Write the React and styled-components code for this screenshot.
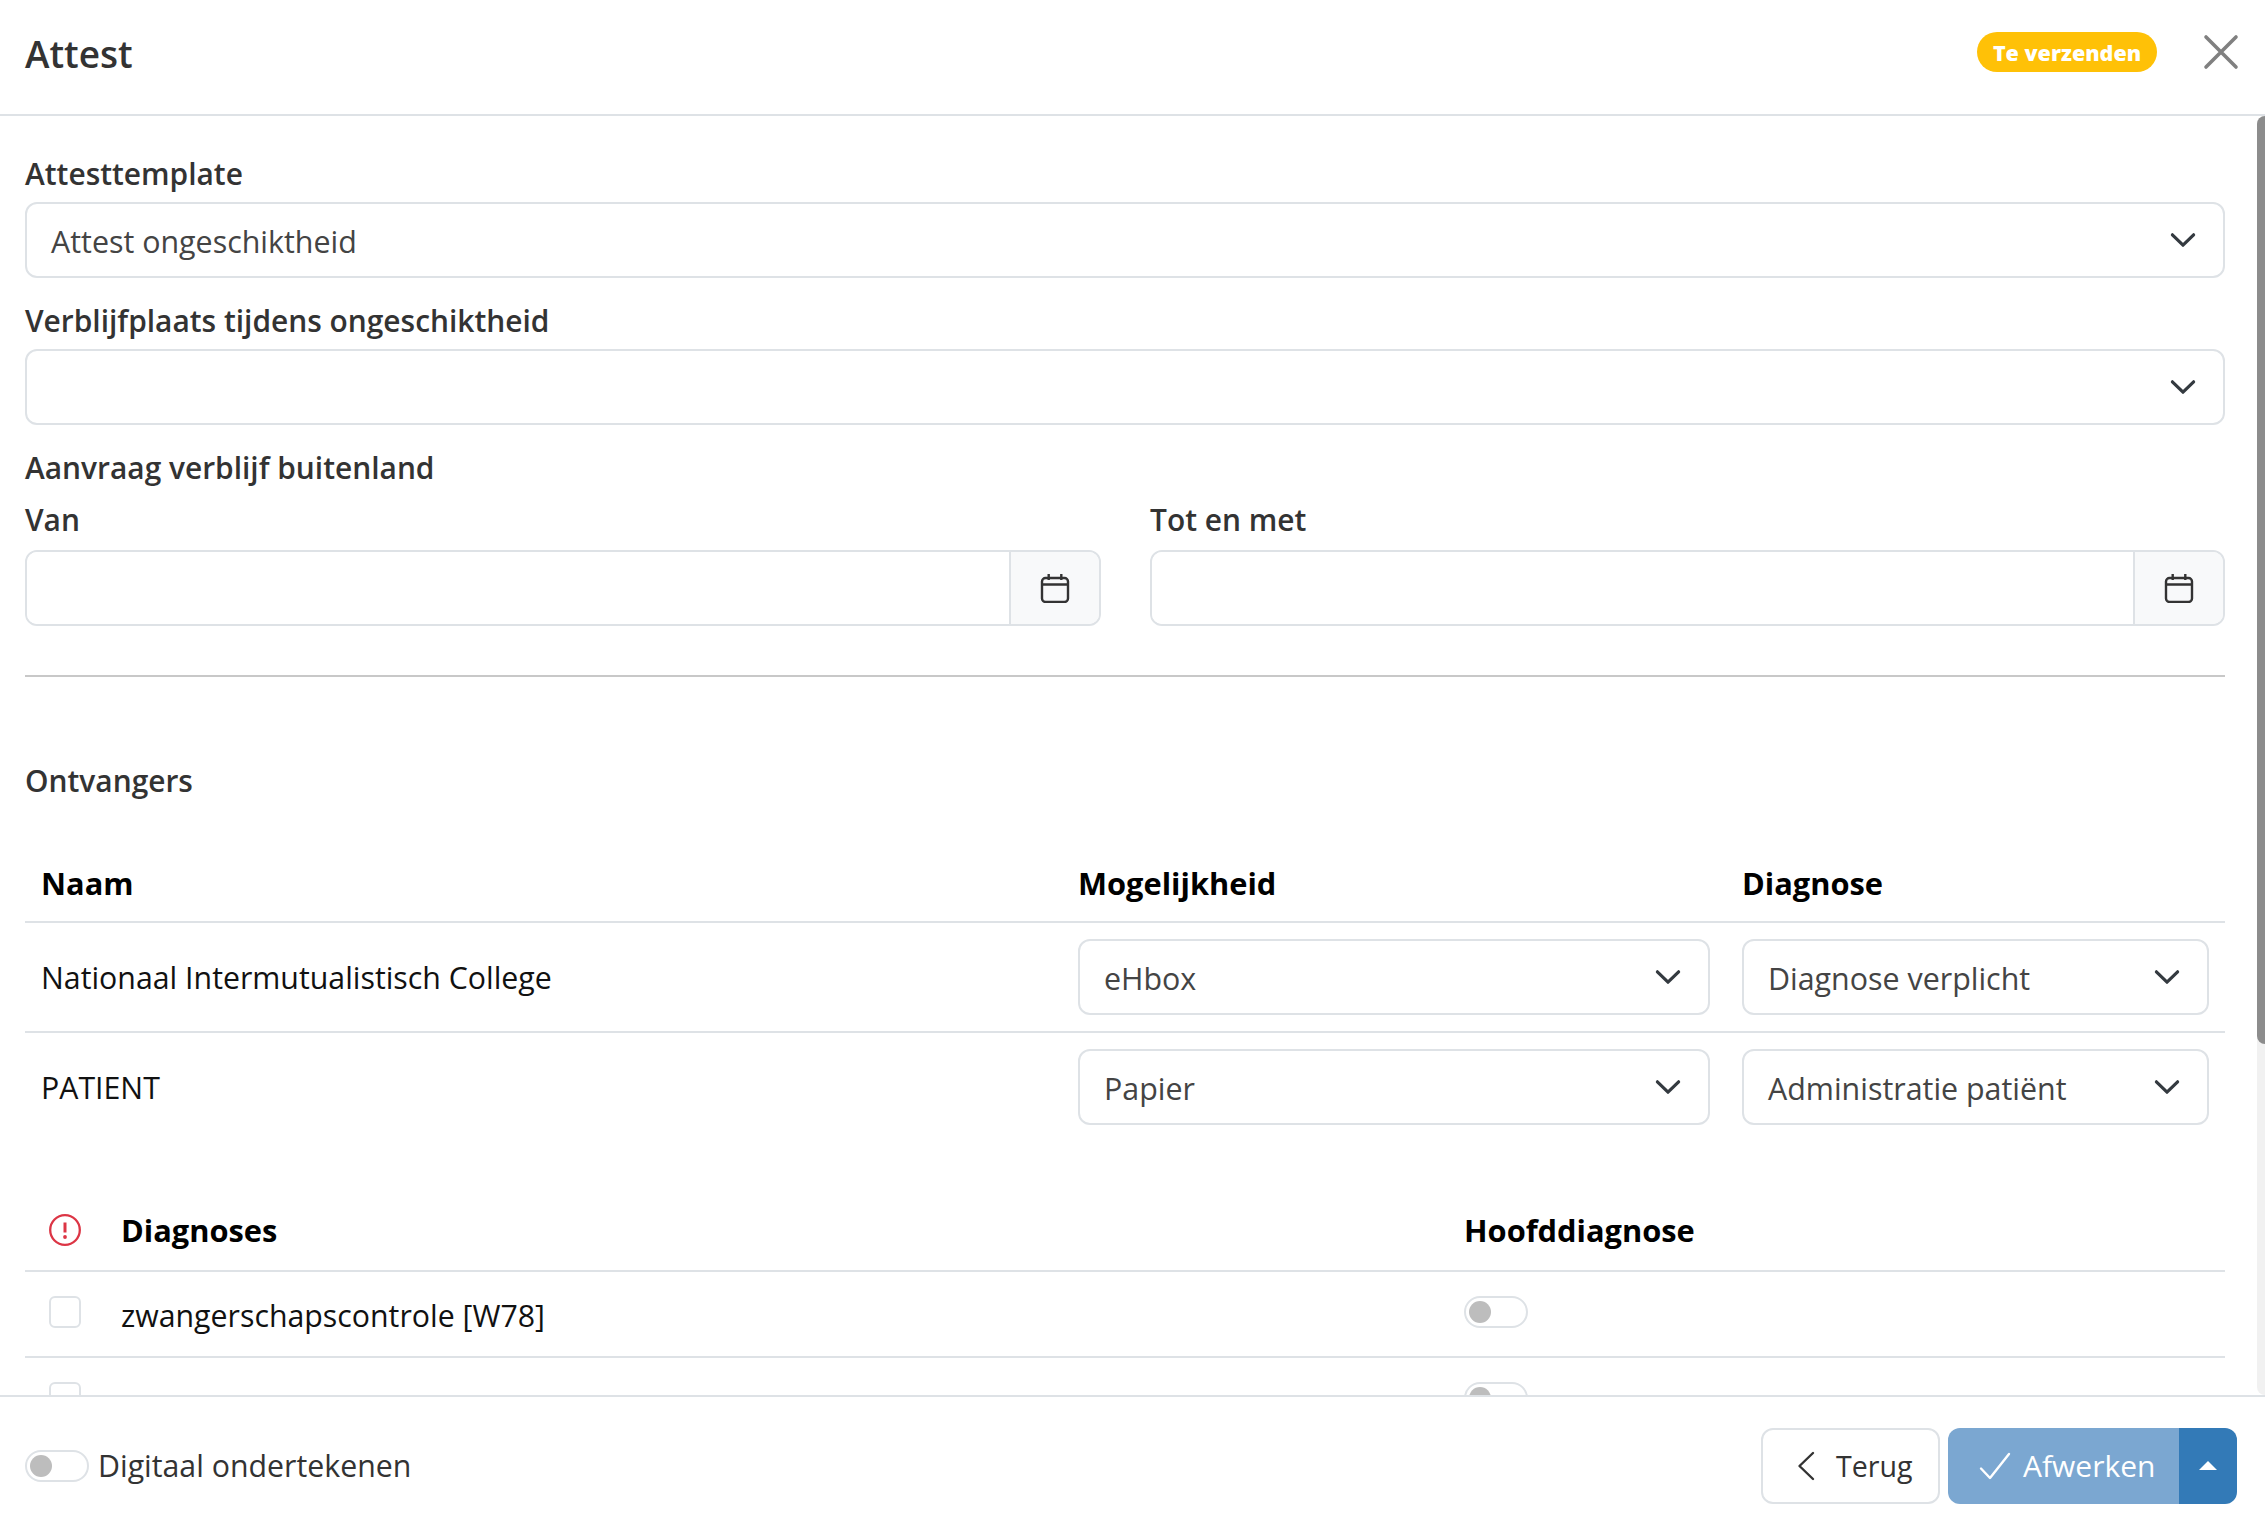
import React from "react"
import styled, { createGlobalStyle } from "styled-components"

const FONT = `"Open Sans", "Noto Sans", "Liberation Sans", sans-serif`

const GlobalStyle = createGlobalStyle`
    html, body {
        margin: 0;
        padding: 0;
        background: #fff;
        overflow: hidden;
    }
    * {
        box-sizing: border-box;
    }
`

const ChevronDown = () => (
    <svg width="32" height="32" viewBox="0 0 16 16" fill="none" stroke="#343a40" strokeWidth="1.6" strokeLinecap="round" strokeLinejoin="round">
        <path d="M2.7 5.4 8 10.6l5.3-5.2" />
    </svg>
)

const CalendarIcon = () => (
    <svg width="30" height="30" viewBox="0 0 30 30" fill="none" stroke="#333" strokeWidth="2.4">
        <rect x="2" y="5" width="26" height="24" rx="3.5" />
        <path d="M2 11.5h26M8.7 1v6M21.3 1v6" />
    </svg>
)

const AlertIcon = () => (
    <svg width="32" height="32" viewBox="0 0 32 32" fill="none" stroke="#dc3545" strokeWidth="2.3">
        <circle cx="16" cy="16" r="14.8" />
        <path d="M16 8.5v10" strokeWidth="3" />
        <circle cx="16" cy="23" r="1.9" fill="#dc3545" stroke="none" />
    </svg>
)

const CloseIcon = () => (
    <svg width="36" height="36" viewBox="0 0 36 36" fill="none" stroke="#808080" strokeWidth="3.6" strokeLinecap="round">
        <path d="M3 3l30 30M33 3 3 33" />
    </svg>
)

const BackIcon = () => (
    <svg width="18" height="30" viewBox="0 0 18 30" fill="none" stroke="#333" strokeWidth="2.4" strokeLinecap="round" strokeLinejoin="round">
        <path d="M16 2 2.5 15 16 28" />
    </svg>
)

const CheckIcon = () => (
    <svg width="32" height="28" viewBox="0 0 32 28" fill="none" stroke="#fff" strokeWidth="2.4" strokeLinecap="round" strokeLinejoin="round">
        <path d="M2 16.5 11 26 30 2" />
    </svg>
)

const SelectBox = ({ value }) => (
    <Select>
        <span>{value}</span>
        <ChevronDown />
    </Select>
)

const DateField = ({ label }) => (
    <div>
        <Label $tight>{label}</Label>
        <InputGroup>
            <DateInput />
            <Addon>
                <CalendarIcon />
            </Addon>
        </InputGroup>
    </div>
)

const App = () => {
    const recipients = [
        { name: "Nationaal Intermutualistisch College", option: "eHbox", diagnosis: "Diagnose verplicht" },
        { name: "PATIENT", option: "Papier", diagnosis: "Administratie patiënt" },
    ]

    return (
        <Page>
            <GlobalStyle />
            <Header>
                <Title>Attest</Title>
                <HeaderActions>
                    <Badge>Te verzenden</Badge>
                    <CloseButton>
                        <CloseIcon />
                    </CloseButton>
                </HeaderActions>
            </Header>

            <BodyFrame>
                <Body>
                    <Label>Attesttemplate</Label>
                    <SelectBox value="Attest ongeschiktheid" />
                    <Label $spaced>Verblijfplaats tijdens ongeschiktheid</Label>
                    <SelectBox value="" />
                    <Label $spaced>Aanvraag verblijf buitenland</Label>
                    <DateRow>
                        <DateField label="Van" />
                        <DateField label="Tot en met" />
                    </DateRow>
                    <Divider />
                    <SectionTitle>Ontvangers</SectionTitle>

                    <RecipientHead>
                        <HeadCell>Naam</HeadCell>
                        <HeadCell>Mogelijkheid</HeadCell>
                        <HeadCell>Diagnose</HeadCell>
                    </RecipientHead>
                    {recipients.map((r, i) => (
                        <RecipientRow key={r.name} $last={i === recipients.length - 1}>
                            <NameCell>{r.name}</NameCell>
                            <SelectCell><SelectBox value={r.option} /></SelectCell>
                            <SelectCell><SelectBox value={r.diagnosis} /></SelectCell>
                        </RecipientRow>
                    ))}

                    <DiagnosisHead>
                        <IconCell><AlertIcon /></IconCell>
                        <HeadCell $flush>Diagnoses</HeadCell>
                        <HeadCell $flush>Hoofddiagnose</HeadCell>
                    </DiagnosisHead>
                    <DiagnosisRow>
                        <IconCell><Checkbox /></IconCell>
                        <DiagnosisText>zwangerschapscontrole [W78]</DiagnosisText>
                        <div><Toggle /></div>
                    </DiagnosisRow>
                    <DiagnosisRow>
                        <IconCell><Checkbox /></IconCell>
                        <DiagnosisText />
                        <div><Toggle /></div>
                    </DiagnosisRow>
                </Body>
                <ScrollTrack>
                    <ScrollThumb />
                </ScrollTrack>
            </BodyFrame>

            <Footer>
                <SignOption>
                    <Toggle />
                    <SignLabel>Digitaal ondertekenen</SignLabel>
                </SignOption>
                <FooterActions>
                    <BackButton>
                        <BackIcon />
                        Terug
                    </BackButton>
                    <SplitButton>
                        <FinishButton>
                            <CheckIcon />
                            Afwerken
                        </FinishButton>
                        <CaretButton>
                            <Caret />
                        </CaretButton>
                    </SplitButton>
                </FooterActions>
            </Footer>
        </Page>
    )
}

const Page = styled.div`
    display: flex;
    flex-direction: column;
    width: 2265px;
    height: 1531px;
    font-family: ${FONT};
    color: #333;
    background: #fff;
`

const Header = styled.header`
    flex: 0 0 116px;
    display: flex;
    align-items: center;
    justify-content: space-between;
    padding: 0 26px 10px 25px;
    border-bottom: 2px solid #dee2e6;
`

const Title = styled.h1`
    margin: 4px 0 0;
    font-size: 37px;
    font-weight: 600;
    line-height: 48px;
    color: #333;
`

const HeaderActions = styled.div`
    display: flex;
    align-items: center;
    gap: 46px;
`

const Badge = styled.span`
    display: flex;
    align-items: center;
    justify-content: center;
    width: 180px;
    height: 40px;
    border-radius: 20px;
    background: #ffc107;
    color: #fff;
    font-size: 21.5px;
    font-weight: 800;
`

const CloseButton = styled.button`
    display: flex;
    padding: 0;
    border: 0;
    background: none;
`

const BodyFrame = styled.div`
    flex: 1;
    min-height: 0;
    position: relative;
`

const Body = styled.main`
    height: 100%;
    overflow: hidden;
    padding: 38px 40px 0 25px;
`

const ScrollTrack = styled.div`
    position: absolute;
    top: 0;
    right: 0;
    bottom: 0;
    width: 8px;
    border-radius: 8px 0 0 8px;
    background: #f1f1f1;
`

const ScrollThumb = styled.div`
    height: 928px;
    border-radius: 8px 0 0 8px;
    background: #8c8c8c;
`

const Label = styled.label`
    display: block;
    margin-top: ${p => (p.$spaced ? "23px" : "0")};
    margin-bottom: ${p => (p.$tight ? "10px" : "8px")};
    font-size: 29.9px;
    font-weight: 550;
    line-height: 40px;
    color: #333;
`

const Select = styled.div`
    display: flex;
    align-items: center;
    justify-content: space-between;
    height: 76px;
    padding: 0 24px;
    border: 2px solid #dee2e6;
    border-radius: 12px;
    background: #fff;
    font-size: 30.4px;
    color: #444;

    span {
        padding-top: 2px;
    }
`

const DateRow = styled.div`
    display: grid;
    grid-template-columns: 1076px 1075px;
    justify-content: space-between;
    margin-top: 12px;
`

const InputGroup = styled.div`
    display: flex;
    height: 76px;
    border: 2px solid #dee2e6;
    border-radius: 12px;
    overflow: hidden;
`

const DateInput = styled.div`
    flex: 1;
    background: #fff;
`

const Addon = styled.div`
    flex: 0 0 90px;
    display: flex;
    align-items: center;
    justify-content: center;
    border-left: 2px solid #dee2e6;
    background: #f8f9fa;
`

const Divider = styled.hr`
    margin: 49px 0 0;
    border: 0;
    border-top: 2px solid #c8c8c8;
`

const SectionTitle = styled.h2`
    margin: 80px 0 0;
    font-size: 29.9px;
    font-weight: 550;
    line-height: 48px;
    color: #333;
`

const recipientColumns = "1037px 664px 1fr"

const RecipientHead = styled.div`
    display: grid;
    grid-template-columns: ${recipientColumns};
    align-items: center;
    height: 99px;
    margin-top: 19px;
    padding-top: 20px;
    border-bottom: 2px solid #dee2e6;
`

const HeadCell = styled.div`
    padding: ${p => (p.$flush ? "0" : "0 16px")};
    font-size: 30.8px;
    font-weight: 700;
    color: #000;
`

const RecipientRow = styled.div`
    display: grid;
    grid-template-columns: ${recipientColumns};
    align-items: center;
    height: 110px;
    border-bottom: 2px solid ${p => (p.$last ? "transparent" : "#dee2e6")};
`

const NameCell = styled.div`
    padding: 0 16px;
    font-size: 30.3px;
    color: #111;
`

const SelectCell = styled.div`
    padding: 0 16px;
`

const diagnosisColumns = "96px 1343px 1fr"

const DiagnosisHead = styled.div`
    display: grid;
    grid-template-columns: ${diagnosisColumns};
    align-items: center;
    height: 129px;
    padding-top: 46px;
    border-bottom: 2px solid #dee2e6;
`

const IconCell = styled.div`
    display: flex;
    padding-left: 24px;
`

const DiagnosisRow = styled.div`
    display: grid;
    grid-template-columns: ${diagnosisColumns};
    align-items: center;
    height: 86px;
    padding-bottom: 4px;
    border-bottom: 2px solid #dee2e6;
`

const DiagnosisText = styled.div`
    padding-top: 6px;
    font-size: 30.3px;
    color: #111;
`

const Checkbox = styled.span`
    display: block;
    width: 32px;
    height: 32px;
    border: 2px solid #dee2e6;
    border-radius: 6px;
    background: #fff;
`

const Toggle = styled.span`
    display: block;
    position: relative;
    width: 64px;
    height: 32px;
    border: 2px solid #dee2e6;
    border-radius: 16px;
    background: #fff;

    &::after {
        content: "";
        position: absolute;
        top: 3px;
        left: 3px;
        width: 22px;
        height: 22px;
        border-radius: 50%;
        background: #bdbdbd;
    }
`

const Footer = styled.footer`
    flex: 0 0 136px;
    display: flex;
    align-items: center;
    justify-content: space-between;
    padding: 3px 28px 0 25px;
    border-top: 2px solid #dee2e6;
`

const SignOption = styled.div`
    display: flex;
    align-items: center;
    gap: 9px;
`

const SignLabel = styled.span`
    font-size: 30.3px;
    color: #333;
`

const FooterActions = styled.div`
    display: flex;
    gap: 8px;
`

const BackButton = styled.button`
    display: flex;
    align-items: center;
    gap: 21px;
    width: 179px;
    height: 76px;
    padding: 0 0 0 34px;
    border: 2px solid #dee2e6;
    border-radius: 12px;
    background: #fff;
    font-family: ${FONT};
    font-size: 28.6px;
    color: #333;
`

const SplitButton = styled.div`
    display: flex;
    height: 76px;
    border-radius: 12px;
    overflow: hidden;
`

const FinishButton = styled.button`
    display: flex;
    align-items: center;
    gap: 12px;
    width: 231px;
    padding: 0 0 0 31px;
    border: 0;
    background: #7ba7d1;
    font-family: ${FONT};
    font-size: 30px;
    color: #fff;
`

const CaretButton = styled.button`
    display: flex;
    align-items: center;
    justify-content: center;
    width: 58px;
    padding: 0;
    border: 0;
    background: #337ab7;
`

const Caret = styled.span`
    width: 0;
    height: 0;
    border-left: 9px solid transparent;
    border-right: 9px solid transparent;
    border-bottom: 9px solid #fff;
`

export default App
